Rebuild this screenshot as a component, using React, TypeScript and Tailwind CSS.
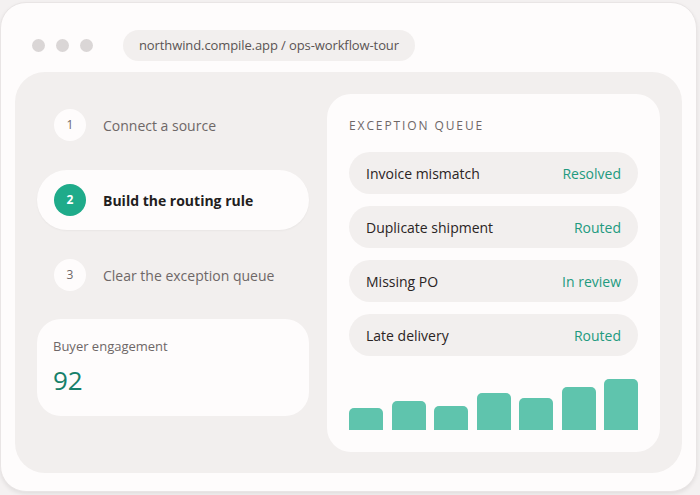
import React from "react"

const steps = [
  { n: 1, label: "Connect a source", active: false },
  { n: 2, label: "Build the routing rule", active: true },
  { n: 3, label: "Clear the exception queue", active: false },
]

const queue = [
  { name: "Invoice mismatch", status: "Resolved" },
  { name: "Duplicate shipment", status: "Routed" },
  { name: "Missing PO", status: "In review" },
  { name: "Late delivery", status: "Routed" },
]

const bars = [22, 29, 24, 37, 32, 43, 51]

export default function App() {
  return (
    <div
      className="w-[700px] h-[495px] bg-[#f4f1f1] overflow-hidden"
      style={{ fontFamily: '"Open Sans", "Noto Sans", sans-serif' }}>
      <div className="mt-[2px] w-[697px] h-[490px] bg-[#fefcfc] rounded-[26px] border border-[#e9e5e5] shadow-[0_2px_4px_rgba(0,0,0,0.08)] flex flex-col">
        {/* Browser bar */}
        <div className="flex items-center pt-[27px] pl-[31px]">
          <div className="flex gap-[11px]">
            <span className="w-[13px] h-[13px] rounded-full bg-[#dad6d6]" />
            <span className="w-[13px] h-[13px] rounded-full bg-[#dad6d6]" />
            <span className="w-[13px] h-[13px] rounded-full bg-[#dad6d6]" />
          </div>
          <div className="ml-[30px] h-[31px] px-[16px] rounded-full bg-[#f2efee] flex items-center text-[13px] text-[#5a5454] tracking-[-0.1px]">
            northwind.compile.app / ops-workflow-tour
          </div>
        </div>

        {/* Main panel */}
        <div className="mt-[11px] ml-[14px] w-[667px] h-[401px] bg-[#f2efee] rounded-[30px] flex gap-[18px] p-[22px] pb-[21px]">
          {/* Left column */}
          <div className="w-[272px] flex flex-col">
            <div className="flex flex-col gap-[15px] mt-[1px]">
              {steps.map((s) => (
                <div
                  key={s.n}
                  className={`h-[60px] rounded-full flex items-center pl-[17px] gap-[17px] ${
                    s.active ? "bg-[#fefcfc] shadow-[0_1px_2px_rgba(0,0,0,0.04)]" : ""
                  }`}>
                  <span
                    className={`w-[32px] h-[32px] rounded-full flex items-center justify-center text-[12px] ${
                      s.active
                        ? "bg-[#1fab8a] text-white font-bold"
                        : "bg-[#fefcfc] text-[#6e6767]"
                    }`}>
                    {s.n}
                  </span>
                  <span
                    className={`text-[14px] leading-[20px] mt-[1px] ${
                      s.active ? "font-bold text-[#231e1e]" : "text-[#6e6767]"
                    }`}>
                    {s.label}
                  </span>
                </div>
              ))}
            </div>
            <div className="mt-[14px] h-[97px] bg-[#fefcfc] rounded-[24px] pl-[16px] pt-[18px]">
              <p className="text-[13px] text-[#6e6767] leading-[18px]">Buyer engagement</p>
              <p className="mt-[10px] text-[26px] leading-[30px] text-[#16806a]">92</p>
            </div>
          </div>

          {/* Right card */}
          <div className="flex-1 bg-[#fefcfc] rounded-[24px] px-[22px] pt-[24px] pb-[22px] flex flex-col">
            <p className="text-[12px] tracking-[1.9px] text-[#6e6767] leading-[16px]">
              EXCEPTION QUEUE
            </p>
            <div className="mt-[18px] flex flex-col gap-[12px]">
              {queue.map((q) => (
                <div
                  key={q.name}
                  className="h-[42px] rounded-full bg-[#f2efee] flex items-center justify-between px-[17px] text-[14px]">
                  <span className="text-[#2a2424]">{q.name}</span>
                  <span className="text-[#229a7f]">{q.status}</span>
                </div>
              ))}
            </div>
            <div className="mt-auto h-[51px] flex items-end gap-[8.5px]">
              {bars.map((h, i) => (
                <div
                  key={i}
                  className="flex-1 bg-[#5fc4ad] rounded-t-[5px]"
                  style={{ height: h }}
                />
              ))}
            </div>
          </div>
        </div>
      </div>
    </div>
  )
}
